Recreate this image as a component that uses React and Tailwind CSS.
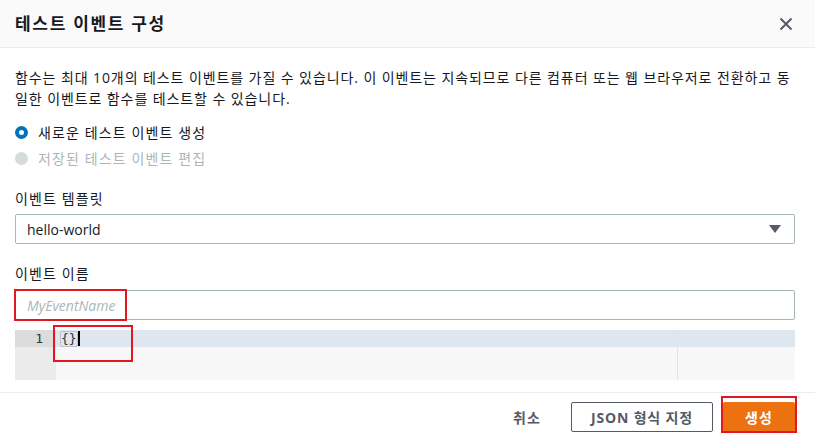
import React from "react";

const font = { fontFamily: '"Open Sans", "Noto Sans CJK KR", sans-serif' };

function Radio({ checked, disabled, label }) {
  return (
    <label className="flex items-center gap-[10px] h-[26px]">
      {checked ? (
        <span className="w-[13px] h-[13px] rounded-full border-[4px] border-[#0073bb] bg-white" />
      ) : (
        <span className="w-[13px] h-[13px] rounded-full bg-[#d5dbdb]" />
      )}
      <span className={disabled ? "tracking-[0.08em] text-[#aab7b8]" : "tracking-[0.08em] text-[#16191f]"}>{label}</span>
    </label>
  );
}

export default function App() {
  return (
    <div className="w-[815px] h-[437px] bg-white text-[14px] text-[#16191f] overflow-hidden" style={font}>
      <div className="h-[48px] bg-[#fafafa] border-b border-[#eaeded] flex items-center justify-between pl-[15px] pr-[22px]">
        <h1 className="text-[17px] font-bold tracking-[0.1em] text-[#16191f]">테스트 이벤트 구성</h1>
        <svg width="14" height="14" viewBox="0 0 14 14" className="text-[#545b64]">
          <path d="M1.5 1.5 L12.5 12.5 M12.5 1.5 L1.5 12.5" stroke="currentColor" strokeWidth="2" fill="none" />
        </svg>
      </div>

      <div className="pl-[15px] pr-[20px] pt-[19px]">
        <p className="leading-[21px] tracking-[0.065em] break-all text-[#16191f]">
          함수는 최대 10개의 테스트 이벤트를 가질 수 있습니다. 이 이벤트는 지속되므로 다른 컴퓨터 또는 웹 브라우저로 전환하고 동일한 이벤트로 함수를 테스트할 수 있습니다.
        </p>

        <div className="mt-[10px] flex flex-col">
          <Radio checked label="새로운 테스트 이벤트 생성" />
          <Radio disabled label="저장된 테스트 이벤트 편집" />
        </div>

        <div className="mt-[18px] leading-[20px] tracking-[0.08em]">이벤트 템플릿</div>
        <div className="mt-[5px] h-[30px] border border-[#aab7b8] rounded-[2px] flex items-center justify-between pl-[11px] pr-[13px]">
          <span>hello-world</span>
          <svg width="12" height="8" viewBox="0 0 12 8">
            <path d="M0 0 H12 L6 8 Z" fill="#545b64" />
          </svg>
        </div>

        <div className="mt-[20px] leading-[20px] tracking-[0.08em]">이벤트 이름</div>
        <div className="relative mt-[6px] h-[30px] border border-[#aab7b8] rounded-[2px] flex items-center pl-[11px]">
          <span className="italic text-[#aab7b8]">MyEventName</span>
          <div className="absolute left-[-2px] top-[-2px] w-[113px] h-[32px] border-2 border-[#e4161f]" />
        </div>

        <div className="relative mt-[10px] h-[50px] flex bg-[#f7f7f7]">
          <div className="w-[41px] bg-[#ebebeb] flex flex-col">
            <div className="h-[17px] bg-[#dcdcdc] text-right pr-[13px] text-[13px] leading-[17px] text-[#333]" style={{ fontFamily: '"DejaVu Sans Mono", monospace' }}>1</div>
          </div>
          <div className="flex-1 relative">
            <div className="h-[17px] bg-[#dee6f0] flex items-center pl-[4px]">
              <span className="text-[13px] leading-[14px] text-[#333] border border-[#b8c3cf] rounded-[2px]" style={{ fontFamily: '"DejaVu Sans Mono", monospace' }}>{"{}"}</span>
              <span className="w-[2px] h-[15px] bg-black" />
            </div>
            <div className="absolute top-0 bottom-0 left-[621px] w-px bg-[#e3e3e3]" />
          </div>
          <div className="absolute left-[38px] top-[-5px] w-[80px] h-[37px] border-2 border-[#e4161f]" />
        </div>
      </div>

      <div className="mt-[12px] border-t border-[#eaeded] flex items-center justify-end pr-[20px] pt-[9px]">
        <button className="px-[14px] h-[30px] font-bold tracking-[0.08em] text-[#545b64] mr-[16px]">취소</button>
        <button className="h-[30px] px-[19px] border border-[#545b64] rounded-[2px] font-bold tracking-[0.06em] text-[#545b64] bg-white mr-[10px]">JSON 형식 지정</button>
        <div className="relative">
          <button className="h-[30px] w-[72px] bg-[#ec7211] rounded-[2px] font-bold tracking-[0.08em] text-white">생성</button>
          <div className="absolute left-[-2px] top-[-6px] w-[76px] h-[37px] border-2 border-[#e4161f]" />
        </div>
      </div>
    </div>
  );
}
